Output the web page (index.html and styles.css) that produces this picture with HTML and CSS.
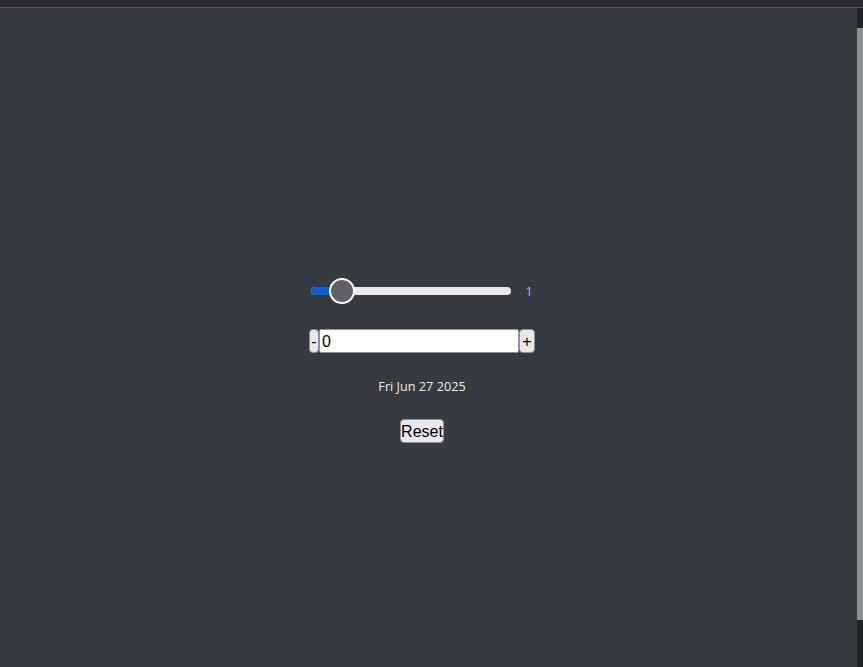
FILE: index.html
```html
<!DOCTYPE html>
<html>
<head>
<meta charset="utf-8">
<link rel="stylesheet" href="styles.css">
</head>
<body>
<div class="topbar"></div>
<div class="frame">
  <main class="page">
    <div class="slider-row">
      <div class="slider">
        <div class="track"><div class="fill"></div></div>
        <div class="thumb"></div>
      </div>
      <span class="value">1</span>
    </div>
    <div class="number-row">
      <button class="btn step minus">-</button>
      <input class="num" type="text" value="0">
      <button class="btn step plus">+</button>
    </div>
    <div class="date">Fri Jun 27 2025</div>
    <button class="btn reset">Reset</button>
  </main>
  <div class="scrollbar">
    <div class="sb-top"></div>
    <div class="sb-thumb"></div>
    <div class="sb-bottom"></div>
  </div>
</div>
</body>
</html>
```
FILE: styles.css
```css
html, body {
  margin: 0;
  padding: 0;
  height: 100%;
  overflow: hidden;
}
body {
  background: #363a41;
  font-family: "Liberation Sans", Arial, sans-serif;
  display: flex;
  flex-direction: column;
}
.topbar {
  height: 7px;
  background: #2b2a33;
  border-bottom: 1px solid #55555f;
  flex: none;
}
.frame {
  flex: 1;
  display: flex;
}
.page {
  flex: 1;
  padding-right: 13px;
  padding-top: 269px;
  display: flex;
  flex-direction: column;
  align-items: center;
}
.slider-row {
  height: 28px;
  display: flex;
  align-items: center;
}
.slider {
  position: relative;
  width: 200px;
  height: 28px;
  display: flex;
  align-items: center;
}
.track {
  width: 200px;
  height: 8px;
  border-radius: 4px;
  background: #e9e9ed;
  overflow: hidden;
}
.fill {
  width: 31px;
  height: 100%;
  background: #0b5fd6;
}
.thumb {
  position: absolute;
  left: 18px;
  top: 1px;
  width: 22px;
  height: 22px;
  border-radius: 50%;
  background: #60606b;
  border: 2px solid #ffffff;
}
.value {
  margin-left: 14px;
  padding-top: 1px;
  font-family: "Open Sans", "Noto Sans", sans-serif;
  font-size: 12.5px;
  color: #9fc3fb;
  line-height: 16px;
}
.number-row {
  margin-top: 24px;
  display: flex;
  height: 24px;
}
.btn {
  appearance: none;
  -webkit-appearance: none;
  background: #e9e9ed;
  border: 1px solid #8f8f9d;
  border-radius: 4px;
  color: #000;
  font-family: "Liberation Sans", Arial, sans-serif;
  font-size: 16px;
  line-height: 18px;
  padding: 1px 0 0 0;
  margin: 0;
}
.step {
  height: 24px;
}
.minus {
  width: 10px;
}
.plus {
  width: 16px;
}
.num {
  appearance: none;
  -webkit-appearance: none;
  box-sizing: border-box;
  width: 200px;
  height: 24px;
  margin: 0;
  padding: 1px 2px 0 2px;
  border: 1px solid #8f8f9d;
  border-radius: 2px;
  background: #ffffff;
  color: #000;
  font-family: "Liberation Sans", Arial, sans-serif;
  font-size: 16px;
  outline: none;
}
.date {
  margin-top: 25px;
  font-family: "Open Sans", "Noto Sans", sans-serif;
  font-size: 12.7px;
  line-height: 16px;
  color: #ececf0;
}
.reset {
  margin-top: 25px;
  height: 24px;
  width: 44px;
}
.scrollbar {
  width: 6px;
  display: flex;
  flex-direction: column;
}
.sb-top {
  height: 20px;
  background: #23242a;
}
.sb-thumb {
  height: 592px;
  background: #8e8e92;
}
.sb-bottom {
  flex: 1;
  background: #23242a;
}
```
